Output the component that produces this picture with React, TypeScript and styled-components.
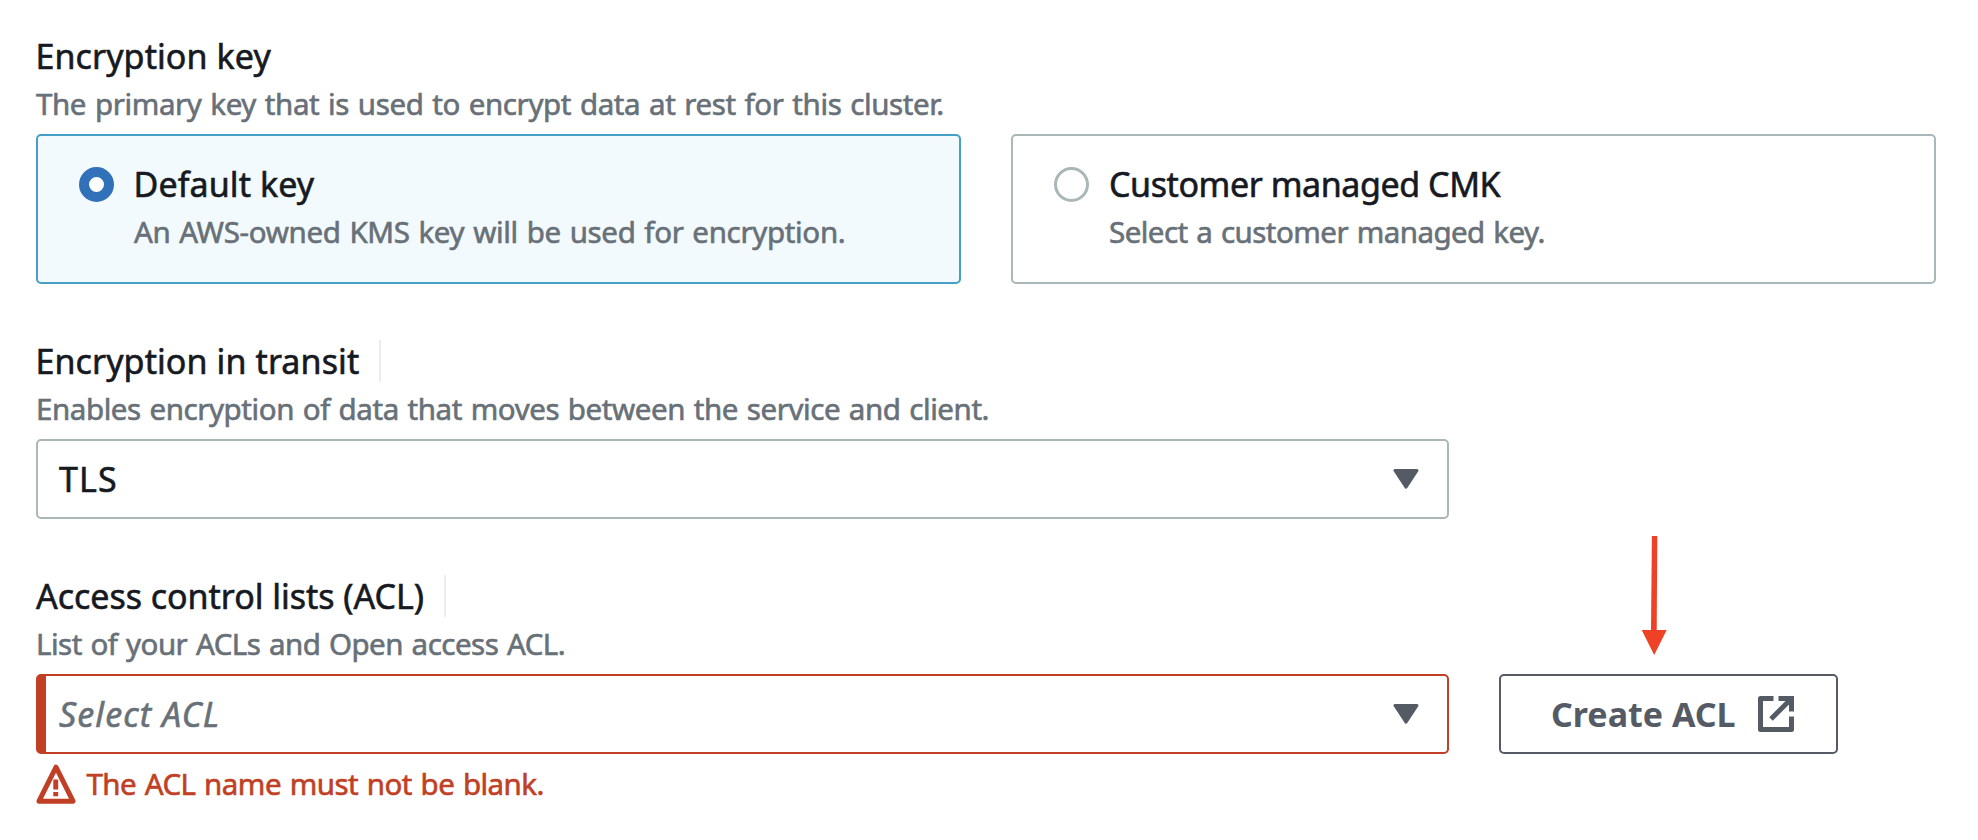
import React from 'react';
import styled, { createGlobalStyle, css } from 'styled-components';

const color = {
  ink: '#16191f',
  muted: '#687078',
  line: '#aab7b8',
  divider: '#eaeded',
  accent: '#3071b9',
  selectedLine: '#459fc7',
  selectedFill: '#f2fafd',
  error: '#c03f25',
  button: '#545b64',
  arrow: '#ee4126',
};

const GlobalStyle = createGlobalStyle`
  body {
    margin: 0;
    background: #fff;
    font-family: 'Noto Sans', 'Open Sans', sans-serif;
  }
  * { box-sizing: border-box; }
`;

interface TextProps {
  $track?: number;
  $shift?: number;
}

const textFit = css<TextProps>`
  letter-spacing: ${(p) => p.$track ?? 0}px;
  margin-left: ${(p) => p.$shift ?? 0}px;
  white-space: nowrap;
  -webkit-text-stroke: 0.6px currentColor;
`;

const smallText = css`
  font-size: 29.5px;
  word-spacing: 1.5px;
`;

const Form = styled.main`
  display: flex;
  flex-direction: column;
  gap: 55px;
  width: 1978px;
  height: 840px;
  padding: 34px 42px 0 36px;
`;

const Field = styled.section`
  display: flex;
  flex-direction: column;
`;

const FieldHeader = styled.div`
  display: flex;
  align-items: center;
  gap: 20px;
  height: 44px;
`;

const Label = styled.span<TextProps>`
  ${textFit}
  font-size: 34px;
  line-height: 44px;
  color: ${color.ink};
`;

const Divider = styled.span`
  width: 2px;
  height: 42px;
  background: ${color.divider};
`;

const Description = styled.p<TextProps>`
  margin: 0 0 4px;
  ${smallText}
  line-height: 52px;
  color: ${color.muted};
  ${textFit}
`;

const Tiles = styled.div`
  display: grid;
  grid-template-columns: 1fr 1fr;
  gap: 50px;
`;

const Tile = styled.label<{ $selected?: boolean }>`
  display: flex;
  gap: 20px;
  height: 150px;
  padding: 26px 41px 0;
  border: 2px solid ${(p) => (p.$selected ? color.selectedLine : color.line)};
  border-radius: 5px;
  background: ${(p) => (p.$selected ? color.selectedFill : '#fff')};
`;

const Radio = styled.span<{ $selected?: boolean }>`
  flex: none;
  width: 35px;
  height: 35px;
  margin-top: 5px;
  border: ${(p) => (p.$selected ? `10.5px solid ${color.accent}` : `3px solid ${color.line}`)};
  border-radius: 50%;
  background: #fff;
`;

const TileText = styled.div`
  display: flex;
  flex-direction: column;
`;

const TileDescription = styled.span<TextProps>`
  ${textFit}
  ${smallText}
  line-height: 51px;
  color: ${color.muted};
`;

const ControlRow = styled.div`
  display: flex;
  gap: 50px;
`;

const Select = styled.div<{ $invalid?: boolean }>`
  display: flex;
  align-items: center;
  justify-content: space-between;
  width: 1413px;
  height: 80px;
  padding: 0 28px 0 ${(p) => (p.$invalid ? 13 : 21)}px;
  border: 2px solid ${(p) => (p.$invalid ? color.error : color.line)};
  border-left-width: ${(p) => (p.$invalid ? 10 : 2)}px;
  border-radius: 5px;
  background: #fff;
`;

const Placeholder = styled(Label)`
  font-style: italic;
  color: ${color.muted};
`;

const ButtonSlot = styled.div`
  position: relative;
`;

const Button = styled.button`
  display: flex;
  align-items: center;
  gap: 22px;
  width: 339px;
  height: 80px;
  padding: 0 0 0 50px;
  border: 2px solid ${color.button};
  border-radius: 5px;
  background: #fff;
  color: ${color.button};
  font: 700 34px/44px 'Noto Sans', 'Open Sans', sans-serif;
  white-space: nowrap;
`;

const Pointer = styled.svg`
  position: absolute;
  left: 142px;
  top: -138px;
`;

const ErrorRow = styled.div`
  display: flex;
  gap: 10px;
  padding-top: 10px;
`;

const ErrorText = styled.span<TextProps>`
  ${textFit}
  ${smallText}
  line-height: 39px;
  color: ${color.error};
`;

const Caret = () => (
  <svg width="26" height="20" viewBox="0 0 26 20">
    <path d="M2 1.5H24L13 18.2Z" fill={color.button} stroke={color.button} strokeWidth="3" strokeLinejoin="round" />
  </svg>
);

const ExternalIcon = () => (
  <svg width="36" height="36" viewBox="0 0 36 36" fill="none" stroke="currentColor" strokeWidth="5">
    <path d="M15.5 2.5H2.5V33.5H33.5V20.5" strokeLinejoin="round" />
    <path d="M20.5 2.5H33.5V15.5" />
    <path d="M33 3L13 23" />
  </svg>
);

const WarningIcon = () => (
  <svg width="40" height="40" viewBox="0 0 40 40">
    <path d="M20 3.2L37 37.2H3Z" fill="none" stroke={color.error} strokeWidth="5" strokeLinejoin="round" />
    <path d="M17.3 15.5H22.2V25.5H17.3ZM17.3 28H22.2V32.3H17.3Z" fill={color.error} />
  </svg>
);

export default function App() {
  return (
    <>
      <GlobalStyle />
      <Form>
        <Field>
          <FieldHeader>
            <Label $track={0.1} $shift={-0.5}>Encryption key</Label>
          </FieldHeader>
          <Description $track={-0.385}>
            The primary key that is used to encrypt data at rest for this cluster.
          </Description>
          <Tiles>
            <Tile $selected>
              <Radio $selected />
              <TileText>
                <Label $track={0.1} $shift={-0.5}>Default key</Label>
                <TileDescription $track={-0.33}>An AWS-owned KMS key will be used for encryption.</TileDescription>
              </TileText>
            </Tile>
            <Tile>
              <Radio />
              <TileText>
                <Label $track={-0.42}>Customer managed CMK</Label>
                <TileDescription $track={-0.54}>Select a customer managed key.</TileDescription>
              </TileText>
            </Tile>
          </Tiles>
        </Field>

        <Field>
          <FieldHeader>
            <Label $track={0.1} $shift={-0.5}>Encryption in transit</Label>
            <Divider />
          </FieldHeader>
          <Description $track={-0.425}>
            Enables encryption of data that moves between the service and client.
          </Description>
          <Select>
            <Label $track={1.1}>TLS</Label>
            <Caret />
          </Select>
        </Field>

        <Field>
          <FieldHeader>
            <Label $track={-0.03}>Access control lists (ACL)</Label>
            <Divider />
          </FieldHeader>
          <Description $track={-0.52}>
            List of your ACLs and Open access ACL.
          </Description>
          <ControlRow>
            <Select $invalid>
              <Placeholder $track={1.1}>Select ACL</Placeholder>
              <Caret />
            </Select>
            <ButtonSlot>
              <Button>
                Create ACL
                <ExternalIcon />
              </Button>
              <Pointer width="28" height="120" viewBox="0 0 28 120" fill={color.arrow}>
                <path d="M10.9 0H16.3L15.7 95H10Z" />
                <path d="M0.7 94H25.7L13.2 119Z" />
              </Pointer>
            </ButtonSlot>
          </ControlRow>
          <ErrorRow>
            <WarningIcon />
            <ErrorText $track={-0.53} $shift={0.4}>The ACL name must not be blank.</ErrorText>
          </ErrorRow>
        </Field>
      </Form>
    </>
  );
}
